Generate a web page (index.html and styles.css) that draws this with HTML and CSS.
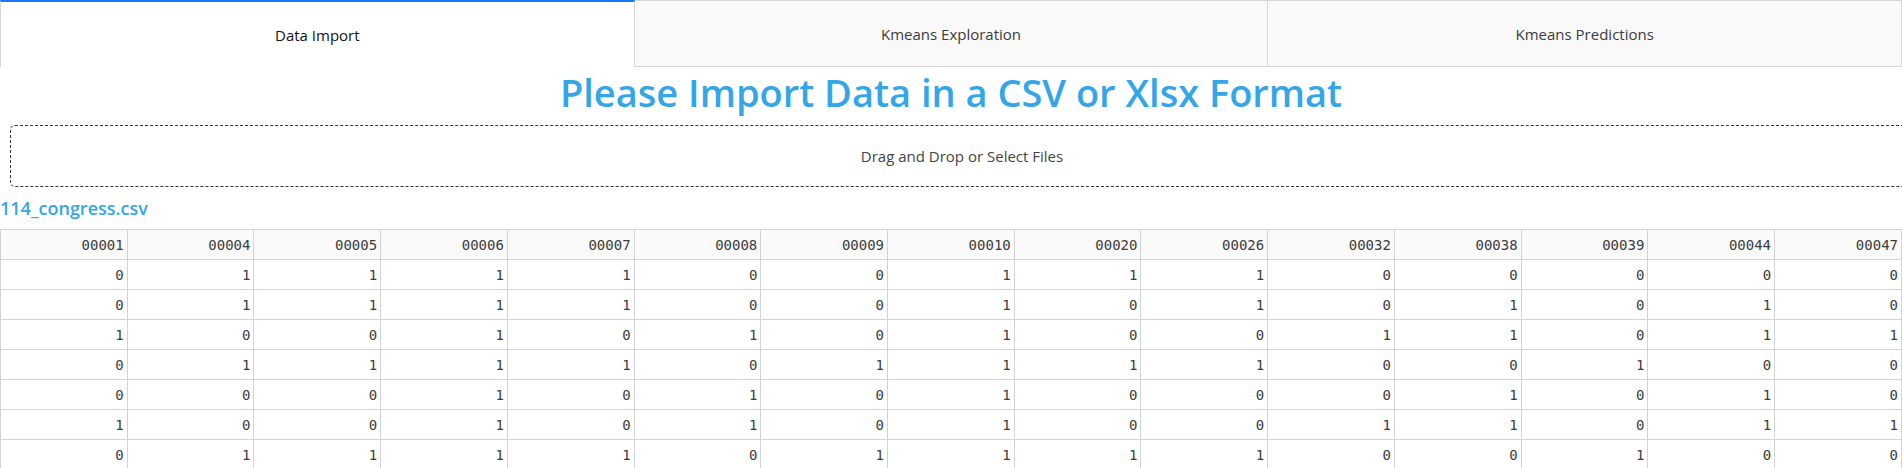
FILE: index.html
```html
<!DOCTYPE html>
<html>
<head>
<meta charset="utf-8">
<link rel="stylesheet" href="styles.css">
</head>
<body>
<div class="tabs">
  <div class="tab selected">Data Import</div>
  <div class="tab">Kmeans Exploration</div>
  <div class="tab">Kmeans Predictions</div>
</div>
<h1 class="title">Please Import Data in a CSV or Xlsx Format</h1>
<div class="upload">Drag and Drop or Select Files</div>
<h5 class="filename">114_congress.csv</h5>
<table class="grid">
  <thead>
    <tr><th>00001</th><th>00004</th><th>00005</th><th>00006</th><th>00007</th><th>00008</th><th>00009</th><th>00010</th><th>00020</th><th>00026</th><th>00032</th><th>00038</th><th>00039</th><th>00044</th><th>00047</th></tr>
  </thead>
  <tbody>
    <tr><td>0</td><td>1</td><td>1</td><td>1</td><td>1</td><td>0</td><td>0</td><td>1</td><td>1</td><td>1</td><td>0</td><td>0</td><td>0</td><td>0</td><td>0</td></tr>
    <tr><td>0</td><td>1</td><td>1</td><td>1</td><td>1</td><td>0</td><td>0</td><td>1</td><td>0</td><td>1</td><td>0</td><td>1</td><td>0</td><td>1</td><td>0</td></tr>
    <tr><td>1</td><td>0</td><td>0</td><td>1</td><td>0</td><td>1</td><td>0</td><td>1</td><td>0</td><td>0</td><td>1</td><td>1</td><td>0</td><td>1</td><td>1</td></tr>
    <tr><td>0</td><td>1</td><td>1</td><td>1</td><td>1</td><td>0</td><td>1</td><td>1</td><td>1</td><td>1</td><td>0</td><td>0</td><td>1</td><td>0</td><td>0</td></tr>
    <tr><td>0</td><td>0</td><td>0</td><td>1</td><td>0</td><td>1</td><td>0</td><td>1</td><td>0</td><td>0</td><td>0</td><td>1</td><td>0</td><td>1</td><td>0</td></tr>
    <tr><td>1</td><td>0</td><td>0</td><td>1</td><td>0</td><td>1</td><td>0</td><td>1</td><td>0</td><td>0</td><td>1</td><td>1</td><td>0</td><td>1</td><td>1</td></tr>
    <tr><td>0</td><td>1</td><td>1</td><td>1</td><td>1</td><td>0</td><td>1</td><td>1</td><td>1</td><td>1</td><td>0</td><td>0</td><td>1</td><td>0</td><td>0</td></tr>
  </tbody>
</table>
</body>
</html>
```
FILE: styles.css
```css
html, body {
  margin: 0;
  padding: 0;
  overflow: hidden;
  background: #fff;
}
body {
  font-family: "Open Sans", "Noto Sans", sans-serif;
  color: #222;
}
.tabs {
  display: flex;
  height: 67px;
}
.tab {
  flex: 1 1 0;
  box-sizing: border-box;
  display: flex;
  align-items: center;
  justify-content: center;
  background: #f9f9f9;
  border: 1px solid #d6d6d6;
  border-left: none;
  font-size: 15px;
  color: #3c3c3c;
  padding-top: 1px;
}
.tab.selected {
  background: #fff;
  border-top: 2px solid #1975fa;
  border-left: 1px solid #d6d6d6;
  border-bottom: none;
  color: #111;
}
.title {
  margin: 0;
  height: 48px;
  line-height: 50px;
  text-align: center;
  font-size: 38px;
  font-weight: 600;
  color: #34a6e8;
}
.upload {
  margin: 10px;
  width: 100%;
  height: 60px;
  line-height: 60px;
  border: 1px dashed #333;
  border-radius: 5px;
  text-align: center;
  font-size: 15px;
  color: #444;
}
.filename {
  margin: 0;
  height: 22px;
  line-height: 22px;
  padding-bottom: 10px;
  font-size: 18px;
  font-weight: 600;
  color: #34a6e8;
}
.grid {
  width: 100%;
  table-layout: fixed;
  border-collapse: collapse;
  font-family: "DejaVu Sans Mono", "Liberation Mono", monospace;
  font-size: 14px;
  color: #3c3c3c;
}
.grid th, .grid td {
  border: 1px solid #d3d3d3;
  height: 29px;
  padding: 0 3px;
  text-align: right;
  font-weight: normal;
}
.grid th {
  background: #fafafa;
}
```
